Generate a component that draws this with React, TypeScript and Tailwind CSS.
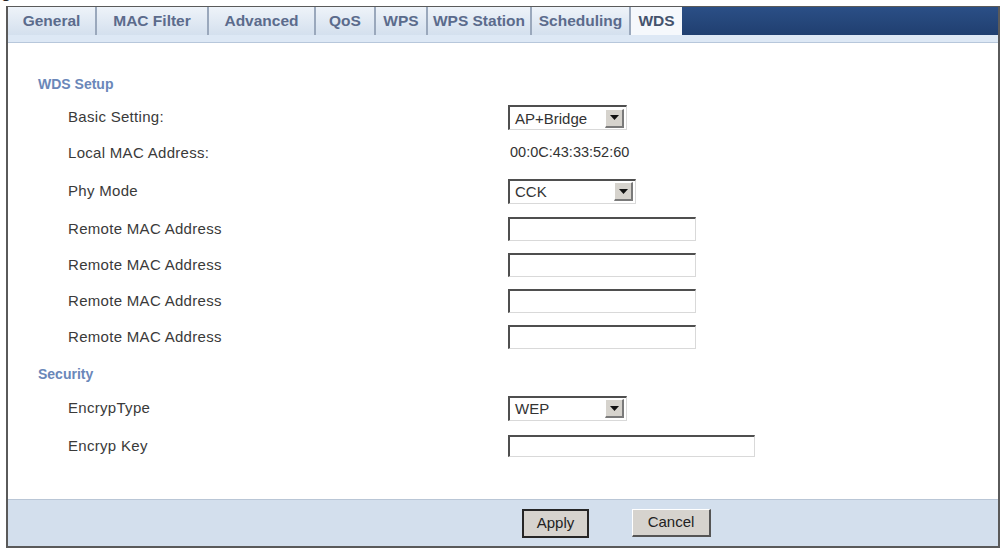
import React from "react";

const tabs = [
  { label: "General", w: "w-[89px]" },
  { label: "MAC Filter", w: "w-[112px]" },
  { label: "Advanced", w: "w-[107px]" },
  { label: "QoS", w: "w-[60px]" },
  { label: "WPS", w: "w-[52px]" },
  { label: "WPS Station", w: "w-[104px]" },
  { label: "Scheduling", w: "w-[99px]" },
];

// classic inset field border: dark top/left, pale bottom/right
const inset =
  "border-t-2 border-l-2 border-b border-r border-t-[#4f4f4f] border-l-[#4f4f4f] border-b-[#d9d9d9] border-r-[#d9d9d9] bg-white";

function Select({ value, width }: { value: string; width: string }) {
  return (
    <div className={`${width} h-[25px] flex items-center pl-[5px] pr-[2px] ${inset}`}>
      <span className="flex-1 text-[15px] leading-none text-[#333]">{value}</span>
      <span className="w-[19px] h-[19px] flex items-center justify-center bg-[#d6d3cd] border-t border-l border-b-2 border-r-2 border-t-white border-l-white border-b-[#7a7a7a] border-r-[#7a7a7a]">
        <svg width="9" height="5" viewBox="0 0 9 5">
          <path d="M0 0h9L4.5 5z" fill="#111" />
        </svg>
      </span>
    </div>
  );
}

function TextInput({ width, height }: { width: string; height: string }) {
  return <div className={`${width} ${height} ${inset}`} />;
}

function Row({
  label,
  height = "h-[36px]",
  children,
}: {
  label: string;
  height?: string;
  children: React.ReactNode;
}) {
  return (
    <div className={`grid grid-cols-[440px_1fr] items-center pl-[60px] ${height}`}>
      <span className="text-[15px] tracking-[0.3px] text-[#3a3a3a]">{label}</span>
      <div className="flex items-center">{children}</div>
    </div>
  );
}

function Heading({ children }: { children: React.ReactNode }) {
  return (
    <div className="h-[26px] flex items-center pl-[30px] text-[14px] font-bold text-[#6a87b9]">
      {children}
    </div>
  );
}

export default function App() {
  return (
    <div
      className="w-[1004px] h-[548px] bg-white flex flex-col overflow-hidden"
      style={{ fontFamily: '"Liberation Sans", Arial, sans-serif' }}
    >
      {/* caption above the panel, cut off by the page top */}
      <div className="h-[6px] overflow-hidden">
        <span className="block -ml-[13px] -mt-[15px] text-[16px] leading-none font-bold text-[#222]">
          Figure
        </span>
      </div>

      <div className="ml-[6px] w-[994px] flex-1 flex flex-col border-t border-l-2 border-r-2 border-b-2 border-[#5a5a5a]">
        {/* tab bar */}
        <div className="h-[28px] flex">
          {tabs.map((t) => (
            <div
              key={t.label}
              className={`${t.w} h-full flex items-center justify-center bg-gradient-to-b from-[#eef3f9] to-[#d4e0ee] border-r-2 border-[#9aa8bc] text-[15.5px] font-bold text-[#5b6b8c]`}
            >
              {t.label}
            </div>
          ))}
          <div className="w-[51px] h-full flex items-center justify-center bg-[#f5f8fc] text-[15.5px] font-bold text-[#44536d]">
            WDS
          </div>
          <div className="flex-1 h-full bg-gradient-to-b from-[#2b4f86] to-[#203f70]" />
        </div>
        <div className="h-[8px] bg-[#dde8f5] border-b border-[#b7c7db]" />

        {/* form body */}
        <div className="flex-1 pt-[28px]">
          <Heading>WDS Setup</Heading>
          <div className="mt-[3px]">
            <Row label="Basic Setting:" height="h-[35px]">
              <Select value="AP+Bridge" width="w-[119px]" />
            </Row>
            <Row label="Local MAC Address:">
              <span className="pl-[2px] text-[14.5px] text-[#333]">00:0C:43:33:52:60</span>
            </Row>
            <Row label="Phy Mode" height="h-[40px]">
              <Select value="CCK" width="w-[128px]" />
            </Row>
            <Row label="Remote MAC Address">
              <TextInput width="w-[188px]" height="h-[24px]" />
            </Row>
            <Row label="Remote MAC Address">
              <TextInput width="w-[188px]" height="h-[24px]" />
            </Row>
            <Row label="Remote MAC Address">
              <TextInput width="w-[188px]" height="h-[24px]" />
            </Row>
            <Row label="Remote MAC Address">
              <TextInput width="w-[188px]" height="h-[24px]" />
            </Row>
          </div>

          <div className="mt-[6px]">
            <Heading>Security</Heading>
          </div>
          <div className="mt-[2px]">
            <Row label="EncrypType" height="h-[38px]">
              <Select value="WEP" width="w-[119px]" />
            </Row>
            <Row label="Encryp Key" height="h-[38px]">
              <TextInput width="w-[247px]" height="h-[22px]" />
            </Row>
          </div>
        </div>

        {/* button bar */}
        <div className="h-[47px] flex items-center gap-[43px] pl-[514px] bg-[#d3dfed] border-t border-[#b9c6d6]">
          <button className="w-[67px] h-[29px] bg-[#d6d3ce] border-2 border-[#262626] text-[15px] text-[#222]">
            Apply
          </button>
          <button className="w-[79px] h-[28px] bg-[#d6d3ce] border-t border-l border-b-2 border-r-2 border-t-white border-l-white border-b-[#555] border-r-[#555] text-[15px] text-[#222]">
            Cancel
          </button>
        </div>
      </div>
    </div>
  );
}
